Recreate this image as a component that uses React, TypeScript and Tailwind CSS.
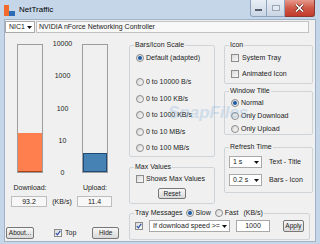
import React from "react";

const Radio = ({ on }: { on?: boolean }) => (
  <span className="flex h-[8px] w-[8px] shrink-0 items-center justify-center rounded-full border border-[#8c8c8c] bg-linear-to-br from-[#d6d6d6] to-[#fbfbfb]">
    {on && <span className="h-[4px] w-[4px] rounded-full bg-[#1d5ba6]" />}
  </span>
);

const Check = ({ on, className = "" }: { on?: boolean; className?: string }) => (
  <span
    className={`flex h-[8px] w-[8px] shrink-0 items-center justify-center border border-[#8c8c8c] bg-linear-to-br from-[#d9d9d9] to-[#fbfbfb] ${className}`}
  >
    {on && (
      <svg width="6" height="6" viewBox="0 0 6 6">
        <path d="M0.8 3.1 L2.4 4.8 L5.3 0.9" fill="none" stroke="#2c4fa6" strokeWidth="1.2" />
      </svg>
    )}
  </span>
);

const Arrow = () => (
  <svg width="5" height="3" viewBox="0 0 5 3" className="shrink-0">
    <path d="M0 0 H5 L2.5 3 Z" fill="#111" />
  </svg>
);

const Combo = ({ text, className = "" }: { text: string; className?: string }) => (
  <div
    className={`flex h-[12px] items-center justify-between border border-[#a9a9a9] bg-white pl-[3px] pr-[2px] ${className}`}
  >
    <span className="whitespace-nowrap">{text}</span>
    <Arrow />
  </div>
);

const Btn = ({ children, className = "" }: { children: React.ReactNode; className?: string }) => (
  <button
    className={`flex items-center justify-center rounded-[2px] border border-[#777777] bg-linear-to-b from-[#f7f7f7] to-[#d9d9d9] text-[6.5px] leading-[8px] text-[#1a1a1a] ${className}`}
  >
    {children}
  </button>
);

const Group = ({
  title,
  className = "",
  children,
}: {
  title: React.ReactNode;
  className?: string;
  children: React.ReactNode;
}) => (
  <fieldset className={`rounded-[2px] border border-[#cfd4d9] ${className}`}>
    <legend className="ml-[4px] px-[1px] leading-[8px]">{title}</legend>
    {children}
  </fieldset>
);

const Bar = ({ fill }: { fill: string }) => (
  <div className="flex h-[129px] w-[26px] flex-col justify-end border border-[#9c9c9c]">
    <div className={fill} />
  </div>
);

const scale = ["10000", "1000", "100", "10", "0"];

export default function App() {
  return (
    <div className="relative flex h-[244px] w-[320px] flex-col overflow-hidden bg-[#c6d6e9] font-['Liberation_Sans',Arial,sans-serif] text-[7px] leading-[8px] text-[#222]">
      {/* title bar */}
      <div className="flex h-[19px] items-start">
        <div className="ml-[4px] mt-[5px] flex items-end">
          <span className="h-[11px] w-[5px] bg-[#f26a2c]" />
          <span className="h-[5px] w-[6px] bg-[#2b6cb5]" />
        </div>
        <span className="ml-[4px] mt-[5px] text-[8px] leading-[9px] text-black">NetTraffic</span>
        <div className="ml-auto mr-[5px] flex">
          <div className="flex h-[17px] w-[17px] items-center justify-center rounded-bl-[3px] border border-t-0 border-[#8da2bc] bg-linear-to-b from-[#e9eef5] to-[#c9d5e4]">
            <span className="mt-[4px] h-[2px] w-[7px] border border-[#55606e] bg-white" />
          </div>
          <div className="flex h-[17px] w-[18px] items-center justify-center border border-l-0 border-t-0 border-[#8da2bc] bg-linear-to-b from-[#e9eef5] to-[#c9d5e4]">
            <span className="h-[6px] w-[8px] border border-[#9aa6b4] bg-[#e4e9ef]" />
          </div>
          <div className="flex h-[17px] w-[30px] items-center justify-center rounded-br-[3px] border border-l-0 border-t-0 border-[#8a3a30] bg-linear-to-b from-[#e6998c] via-[#cf5846] to-[#c23a2a]">
            <svg width="9" height="8" viewBox="0 0 9 8">
              <path d="M1 0.5 L8 7.5 M8 0.5 L1 7.5" stroke="#4a1a14" strokeWidth="2.6" />
              <path d="M1 0.5 L8 7.5 M8 0.5 L1 7.5" stroke="#fff" strokeWidth="1.6" />
            </svg>
          </div>
        </div>
      </div>

      {/* client area */}
      <div className="mx-[4px] flex h-[223px] flex-col border border-[#9fb2c8] bg-[#f0f0f0]">
        <div className="mt-[1px] flex h-[12px]">
          <Combo text="NIC1" className="w-[30px]" />
          <div className="ml-[1px] flex w-[273px] items-center border border-[#c2c2c2] bg-[#f8f8f8] pl-[2px] whitespace-nowrap">
            NVIDIA nForce Networking Controller
          </div>
        </div>

        <div className="flex">
          {/* left: bars */}
          <div className="flex w-[124px] flex-col">
            <div className="mt-[11px] flex pl-[12px]">
              <Bar fill="h-[39px] border-b border-[#a5431a] bg-[#ff7f4f]" />
              <div className="-mt-[4px] flex h-[137px] w-[39px] flex-col items-center justify-between">
                {scale.map((s) => (
                  <span key={s}>{s}</span>
                ))}
              </div>
              <Bar fill="h-[19px] border border-[#1f4b78] bg-[#4682b4]" />
            </div>
            <div className="mt-[7px] flex pl-[12px]">
              <div className="flex w-[26px] justify-center whitespace-nowrap">Download:</div>
              <div className="w-[39px]" />
              <div className="flex w-[26px] justify-center whitespace-nowrap">Upload:</div>
            </div>
            <div className="mt-[4px] flex items-center pl-[6px]">
              <div className="flex h-[11px] w-[36px] items-center justify-center border border-[#bdbdbd] bg-[#f7f7f7]">
                93.2
              </div>
              <div className="w-[30px] text-center">(KB/s)</div>
              <div className="flex h-[11px] w-[35px] items-center justify-center border border-[#bdbdbd] bg-[#f7f7f7]">
                11.4
              </div>
            </div>
            <div className="mt-[20px] flex items-center">
              <Btn className="ml-[1px] h-[12px] w-[28px]">About...</Btn>
              <Check on className="ml-[20px]" />
              <span className="ml-[3px]">Top</span>
              <Btn className="ml-[16px] h-[12px] w-[27px]">Hide</Btn>
            </div>
          </div>

          {/* right: options */}
          <div className="flex flex-col">
            <div className="flex items-start">
              <div className="flex w-[86px] flex-col">
                <Group title="Bars/Icon Scale" className="mt-[8px] h-[116px]">
                  <div className="flex flex-col pl-[6px]">
                    <label className="mt-[5px] flex items-center gap-[2px]">
                      <Radio on /> Default (adapted)
                    </label>
                    <label className="mt-[16px] flex items-center gap-[2px]">
                      <Radio /> 0 to 10000 B/s
                    </label>
                    <label className="mt-[9px] flex items-center gap-[2px]">
                      <Radio /> 0 to 100 KB/s
                    </label>
                    <label className="mt-[8px] flex items-center gap-[2px]">
                      <Radio /> 0 to 1000 KB/s
                    </label>
                    <label className="mt-[9px] flex items-center gap-[2px]">
                      <Radio /> 0 to 10 MB/s
                    </label>
                    <label className="mt-[8px] flex items-center gap-[2px]">
                      <Radio /> 0 to 100 MB/s
                    </label>
                  </div>
                </Group>
                <Group title="Max Values" className="mt-[6px] h-[41px]">
                  <div className="flex flex-col items-start pl-[6px]">
                    <label className="mt-[4px] flex items-center gap-[2px]">
                      <Check /> Shows Max Values
                    </label>
                    <Btn className="ml-[22px] mt-[5px] h-[11px] w-[28px]">Reset</Btn>
                  </div>
                </Group>
              </div>

              <div className="ml-[9px] flex w-[89px] flex-col">
                <Group title="Icon" className="mt-[8px] h-[43px]">
                  <div className="flex flex-col pl-[6px]">
                    <label className="mt-[5px] flex items-center gap-[3px]">
                      <Check /> System Tray
                    </label>
                    <label className="mt-[8px] flex items-center gap-[3px]">
                      <Check /> Animated Icon
                    </label>
                  </div>
                </Group>
                <Group title="Window Title" className="mt-[3px] h-[48px]">
                  <div className="flex flex-col gap-[5px] pl-[6px] pt-[4px]">
                    <label className="flex items-center gap-[2px]">
                      <Radio on /> Normal
                    </label>
                    <label className="flex items-center gap-[2px]">
                      <Radio /> Only Download
                    </label>
                    <label className="flex items-center gap-[2px]">
                      <Radio /> Only Upload
                    </label>
                  </div>
                </Group>
                <Group title="Refresh Time" className="mt-[8px] h-[50px]">
                  <div className="flex flex-col pl-[4px]">
                    <div className="mt-[5px] flex items-center">
                      <Combo text="1 s" className="w-[33px]" />
                      <span className="ml-[7px]">Text - Title</span>
                    </div>
                    <div className="mt-[6px] flex items-center">
                      <Combo text="0.2 s" className="w-[33px]" />
                      <span className="ml-[7px]">Bars - Icon</span>
                    </div>
                  </div>
                </Group>
              </div>
            </div>

            <Group
              className="mt-[5px] h-[31px] w-[181px]"
              title={
                <span className="flex items-center whitespace-nowrap">
                  Tray Messages
                  <span className="ml-[3px]">
                    <Radio on />
                  </span>
                  <span className="ml-[2px]">Slow</span>
                  <span className="ml-[4px]">
                    <Radio />
                  </span>
                  <span className="ml-[2px]">Fast</span>
                  <span className="ml-[5px]">(KB/s)</span>
                </span>
              }
            >
              <div className="mt-[3px] flex items-center pl-[5px]">
                <Check on />
                <Combo text="If download speed >=" className="ml-[6px] w-[81px]" />
                <div className="ml-[6px] flex h-[12px] w-[34px] items-center justify-center border border-[#a9a9a9] bg-white">
                  1000
                </div>
                <Btn className="ml-[13px] h-[12px] w-[21px]">Apply</Btn>
              </div>
            </Group>
          </div>
        </div>
      </div>

      {/* watermark */}
      <span className="pointer-events-none absolute left-[168px] top-[104px] text-[17px] font-bold italic leading-[18px] text-[#6fa3d6] opacity-25">
        SnapFiles
      </span>
    </div>
  );
}
